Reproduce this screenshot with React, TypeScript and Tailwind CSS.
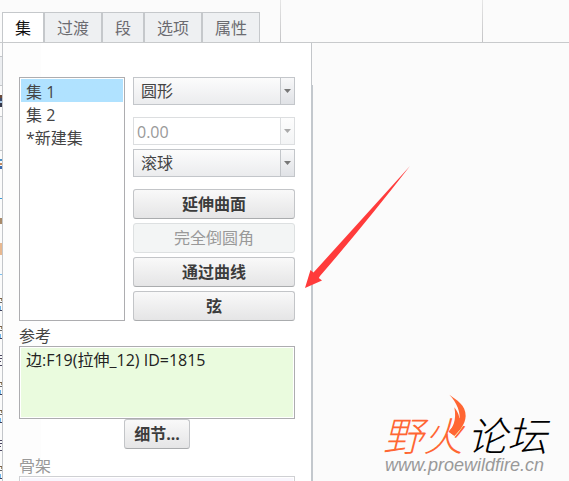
import React from "react";

const tabs = ["集", "过渡", "段", "选项", "属性"];

// edges of the window lying behind the panel
const edgeMarks = [
  { y: 56, h: 1, color: "#c3c6c9" },
  { y: 85, h: 1, color: "#c3c6c9" },
  { y: 95, h: 3, color: "#6b4a3a" },
  { y: 98, h: 3, color: "#3c4a6b" },
  { y: 101, h: 2, color: "#a8c8e8" },
  { y: 103, h: 4, color: "#33384a" },
  { y: 116, h: 1, color: "#c3c6c9" },
  { y: 150, h: 1, color: "#c3c6c9" },
  { y: 159, h: 2, color: "#4a90c8" },
  { y: 163, h: 2, color: "#c08a60" },
  { y: 166, h: 3, color: "#3a6ab0" },
  { y: 198, h: 1, color: "#3a9ad8" },
  { y: 218, h: 6, color: "#a88a6a" },
  { y: 243, h: 12, color: "#e8b890" },
  { y: 274, h: 1, color: "#7ac0f0" },
];

const rowMarks = [298, 326, 382, 410, 466];
const darkRowMarks = [355, 440];

const App = () => {
  return (
    <div className="h-screen flex flex-col overflow-hidden bg-[#fbfbfb] text-base text-[#444] font-['Open_Sans','Noto_Sans_CJK_SC',sans-serif]">
      <Header />
      <main className="relative flex flex-1 min-h-0">
        <BackgroundEdge />
        <SetPanel />
        <div className="flex flex-1 flex-col items-end justify-end pr-4 pb-1.5">
          <SiteLogo />
        </div>
        <PointerArrow />
      </main>
    </div>
  );
};

const Header = () => {
  return (
    <header className="flex shrink-0 h-[43px] border-b border-[#c8cacc]">
      <nav className="flex items-end pl-0.5 w-[280px]">
        {tabs.map((tab, i) => (
          <button
            key={tab}
            className={`h-[30px] px-3 border border-b-0 border-[#c5c8cb] leading-7 ${
              i === 0 ? "bg-white text-[#111]" : "bg-[#eef0f2] text-[#6b6b70]"
            }`}
          >
            {tab}
          </button>
        ))}
      </nav>
      <div className="w-px bg-linear-to-b from-[#e6e6e6] to-[#c4c4c6]" />
      <div className="w-[201px]" />
      <div className="w-px bg-linear-to-b from-[#e6e6e6] to-[#c4c4c6]" />
    </header>
  );
};

const BackgroundEdge = () => {
  return (
    <svg className="w-0.5 h-[438px] shrink-0" viewBox="0 43 2 438">
      <rect x="0" y="43" width="2" height="438" fill="#fbfbfb" />
      <rect x="0" y="57" width="2" height="28" fill="#eceef1" />
      <rect x="0" y="117" width="2" height="33" fill="#f0f1f3" />
      {edgeMarks.map((m) => (
        <rect key={m.y} x="0" y={m.y} width="2" height={m.h} fill={m.color} />
      ))}
      {rowMarks.map((y) => (
        <g key={y}>
          <rect x="0" y={y} width="2" height="1" fill="#7a6248" />
          <rect x="1" y={y + 1} width="1" height="2" fill="#a08a6a" />
          <rect x="0" y={y + 4} width="2" height="1" fill="#6a6a6a" />
          <rect x="0" y={y + 8} width="1" height="4" fill="#6cb4ea" />
          <rect x="0" y={y + 12} width="2" height="1" fill="#3b3f5c" />
        </g>
      ))}
      {darkRowMarks.map((y) => (
        <g key={y} fill="#4a4560">
          <rect x="0" y={y} width="2" height="1" />
          <rect x="0" y={y + 3} width="2" height="1" />
          <rect x="0" y={y + 6} width="1" height="1" />
          <rect x="0" y={y + 10} width="2" height="1" />
        </g>
      ))}
    </svg>
  );
};

const SetPanel = () => {
  return (
    <section className="relative flex flex-col w-[310px] shrink-0 border-x border-[#c3c6ca] bg-linear-to-r from-[#fdfdfd] from-[38px] to-white to-[38px] px-4 pt-[34px]">
      <div className="absolute top-[42px] bottom-0 -right-0.5 w-0.5 bg-[#c3c8cd]" />
      <div className="flex gap-2">
        <select
          size={10}
          defaultValue="集 1"
          aria-label="集"
          className="w-[106px] h-[244px] shrink-0 appearance-none overflow-hidden border border-[#adadb0] bg-white p-px outline-none"
        >
          <ListItem label="集 1" />
          <ListItem label="集 2" />
          <ListItem label="*新建集" />
        </select>

        <div className="flex flex-1 min-w-0 flex-col">
          <Dropdown label="圆形" />
          <div className="flex h-7 mt-3 border border-[#dcdee0] bg-white">
            <input
              disabled
              defaultValue="0.00"
              aria-label="半径"
              className="flex-1 min-w-0 pt-0.5 pl-[3px] text-[#999]"
            />
            <button
              disabled
              aria-label="半径列表"
              className="flex w-3.5 items-center justify-center border-l border-[#dcdee0] bg-linear-to-b from-[#fdfdfd] to-[#f3f4f5]"
            >
              <Caret color="#aaa" />
            </button>
          </div>
          <div className="flex flex-col mt-1">
            <Dropdown label="滚球" />
          </div>
          <div className="flex flex-col gap-1 mt-3">
            <PushButton label="延伸曲面" />
            <PushButton label="完全倒圆角" disabled />
            <PushButton label="通过曲线" />
            <PushButton label="弦" />
          </div>
        </div>
      </div>

      <label htmlFor="refs" className="h-[25px] pt-[3px] leading-6">
        参考
      </label>
      <textarea
        id="refs"
        readOnly
        defaultValue="边:F19(拉伸_12) ID=1815"
        className="block h-[73px] shrink-0 resize-none border border-[#adadb0] bg-[#eafbde] px-1.5 py-px leading-6 text-[#222] shadow-[inset_0_0_0_1px_#fff] outline-none"
      />
      <div className="flex justify-center">
        <PushButton label="细节..." />
      </div>

      <label htmlFor="spine" className="h-[27px] shrink-0 pt-[5px] leading-6 text-[#999]">
        骨架
      </label>
      <textarea
        id="spine"
        disabled
        className="block h-[30px] shrink-0 resize-none border border-[#cfd0d3] bg-[#f8f6fd] shadow-[inset_0_0_0_1px_#fff]"
      />
    </section>
  );
};

const ListItem = ({ label }: { label: string }) => {
  return (
    <option className="h-[23px] min-h-[23px] px-[5px] py-0 leading-[21px] text-[#444] checked:bg-linear-to-r checked:from-[#b0e2ff] checked:to-[#b0e2ff]">
      {label}
    </option>
  );
};

const Dropdown = ({ label }: { label: string }) => {
  return (
    <div className="relative flex h-7 border border-[#c3c6ca]">
      <select
        aria-label={label}
        className="flex-1 appearance-none bg-linear-to-b from-[#fcfcfc] to-[#ebecee] pl-[7px] outline-none"
      >
        <option>{label}</option>
      </select>
      <span className="pointer-events-none absolute inset-y-0 right-0 flex w-3.5 items-center justify-center border-l border-[#c3c6ca] bg-linear-to-b from-[#f8f8f9] to-[#e0e2e6]">
        <Caret color="#777" />
      </span>
    </div>
  );
};

const Caret = ({ color }: { color: string }) => {
  return (
    <svg width="7" height="4" viewBox="0 0 7 4" fill={color}>
      <path d="M0 0h7L3.5 4z" />
    </svg>
  );
};

interface PushButtonProps {
  label: string;
  disabled?: boolean;
}

const PushButton = ({ label, disabled }: PushButtonProps) => {
  return (
    <button
      disabled={disabled}
      className={`h-[30px] shrink-0 px-[9px] rounded-[3px] border leading-7 ${
        disabled
          ? "border-[#dde0e1] bg-[#f3f5f5] text-[#999]"
          : "border-[#c3c5c8] border-b-[#aaacae] bg-linear-to-b from-[#f9f9f9] to-[#e5e5e6] font-bold text-[#3c3c3c]"
      }`}
    >
      {label}
    </button>
  );
};

const PointerArrow = () => {
  return (
    <svg
      className="pointer-events-none absolute left-[300px] top-[117px]"
      width="115"
      height="135"
      viewBox="300 160 115 135"
    >
      <path
        d="M410 166 L313.5 272.5 L310.5 270 L305 288 L322 280.5 L318.8 278 L320 276 Q365 224 410 166Z"
        fill="#ff3b3b"
      />
    </svg>
  );
};

const SiteLogo = () => {
  return (
    <a href="http://www.proewildfire.cn" className="relative block w-[170px]">
      <svg
        className="absolute left-16 -top-5"
        width="20"
        height="50"
        viewBox="20 15 60 150"
      >
        <path
          d="M27 20C48 36 77 50 76 84C75 110 58 127 42 143L25 131C36 122 50 98 42 58C54 74 58 86 57 97C62 75 50 44 27 20Z"
          fill="#ff6633"
        />
        <path
          d="M42 143L25 131C38 116 48 106 50 88L62 92L70 100C66 116 56 130 42 143Z"
          fill="#ff6633"
        />
      </svg>
      <span className="flex gap-1 text-[40px] leading-[42px] font-light italic font-['Noto_Sans_CJK_SC',sans-serif]">
        <span className="text-[#ff6633]">野火</span>
        <span className="text-black">论坛</span>
      </span>
      <span className="block pl-0.5 text-[18px] leading-5 italic text-[#999] font-['Liberation_Sans',sans-serif]">
        www.proewildfire.cn
      </span>
    </a>
  );
};

export default App;
